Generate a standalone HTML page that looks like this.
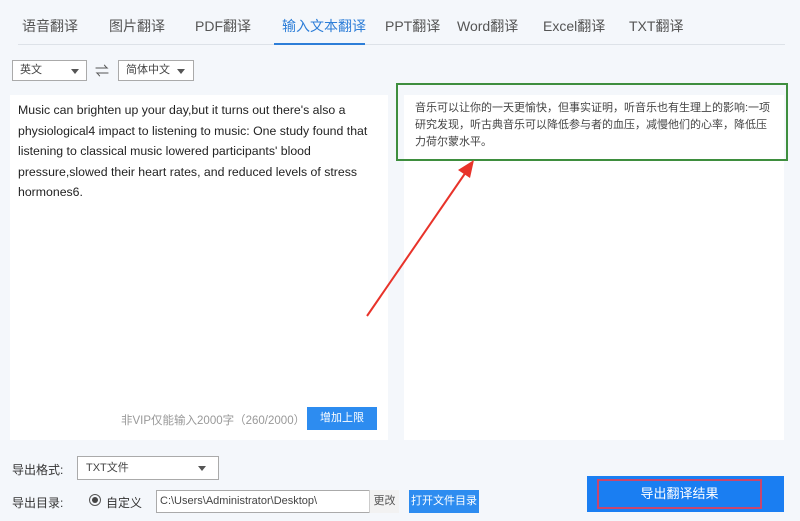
<!DOCTYPE html>
<html><head><meta charset="utf-8"><style>
body{margin:0;width:800px;height:521px;background:#f4f7fb;font-family:"Liberation Sans","Noto Sans CJK SC",sans-serif;position:relative;overflow:hidden;color:#333}
.a{position:absolute}
.tab{position:absolute;top:16px;font-size:14px;color:#555}
.sel{position:absolute;background:#fff;border:1px solid #aaa;font-size:11px;color:#444;box-sizing:border-box;padding:0 7px;line-height:19px}
.tri{position:absolute;width:0;height:0;border-left:4px solid transparent;border-right:4px solid transparent;border-top:5px solid #555}
.btn{position:absolute;background:#2d8cf0;color:#fff;text-align:center;font-size:11px}
</style></head><body>
<div class="a" style="left:18px;top:44px;width:767px;height:1px;background:#dde2e8"></div>
<div class="a" style="left:274px;top:43px;width:91px;height:2px;background:#2d7ed8"></div>
<div class="tab" style="left:22px">语音翻译</div>
<div class="tab" style="left:109px">图片翻译</div>
<div class="tab" style="left:195px">PDF翻译</div>
<div class="tab" style="left:282px;color:#2d7ed8">输入文本翻译</div>
<div class="tab" style="left:385px">PPT翻译</div>
<div class="tab" style="left:457px">Word翻译</div>
<div class="tab" style="left:543px">Excel翻译</div>
<div class="tab" style="left:629px">TXT翻译</div>

<div class="sel" style="left:12px;top:60px;width:75px;height:21px">英文</div><div class="tri" style="left:71px;top:69px"></div>
<div class="a" style="left:95px;top:61px;font-size:14px;color:#555">⇌</div>
<div class="sel" style="left:118px;top:60px;width:76px;height:21px">简体中文</div><div class="tri" style="left:177px;top:69px"></div>

<div class="a" style="left:10px;top:95px;width:378px;height:345px;background:#fff"></div>
<div class="a" style="left:18px;top:100px;width:362px;font-size:12.3px;line-height:20.5px;color:#222">Music can brighten up your day,but it turns out there's also a physiological4 impact to listening to music: One study found that listening to classical music lowered participants' blood pressure,slowed their heart rates, and reduced levels of stress hormones6.</div>
<div class="a" style="left:121px;top:412px;font-size:11.5px;color:#999">非VIP仅能输入2000字（260/2000）</div>
<div class="btn" style="left:307px;top:407px;width:70px;height:23px;line-height:23px">增加上限</div>

<div class="a" style="left:404px;top:95px;width:380px;height:345px;background:#fff"></div>
<div class="a" style="left:396px;top:83px;width:388px;height:74px;border:2px solid #3e8e3e"></div>
<div class="a" style="left:415px;top:100px;width:360px;font-size:11px;line-height:17px;color:#444">音乐可以让你的一天更愉快，但事实证明，听音乐也有生理上的影响:一项研究发现，听古典音乐可以降低参与者的血压，减慢他们的心率，降低压力荷尔蒙水平。</div>
<svg class="a" style="left:0;top:0" width="800" height="521"><line x1="367" y1="316" x2="466" y2="172" stroke="#e8332a" stroke-width="2"/><polygon points="474,160 458,170 470,178" fill="#e8332a"/></svg>

<div class="a" style="left:12px;top:461px;font-size:12px">导出格式:</div>
<div class="sel" style="left:77px;top:456px;width:142px;height:24px;line-height:22px;padding-left:8px">TXT文件</div><div class="tri" style="left:198px;top:466px"></div>
<div class="a" style="left:12px;top:494px;font-size:12px">导出目录:</div>
<div class="a" style="left:89px;top:494px;width:10px;height:10px;border:1px solid #555;border-radius:50%"></div>
<div class="a" style="left:92px;top:497px;width:6px;height:6px;background:#444;border-radius:50%"></div>
<div class="a" style="left:106px;top:494px;font-size:12px">自定义</div>
<div class="sel" style="left:156px;top:490px;width:242px;height:23px;line-height:21px;padding-left:3px">C:\Users\Administrator\Desktop\</div>
<div class="a" style="left:369px;top:490px;width:29px;height:23px;border-left:1px solid #ccc;background:#f2f2f2;font-size:11px;line-height:23px;text-align:center;color:#555">更改</div>
<div class="btn" style="left:409px;top:490px;width:70px;height:23px;line-height:23px">打开文件目录</div>
<div class="btn" style="left:587px;top:476px;width:197px;height:36px;background:#1a7ef2"></div>
<div class="a" style="left:597px;top:479px;width:161px;height:26px;border:2px solid #c9466e;color:#fff;font-size:13px;line-height:26px;text-align:center">导出翻译结果</div>
</body></html>
